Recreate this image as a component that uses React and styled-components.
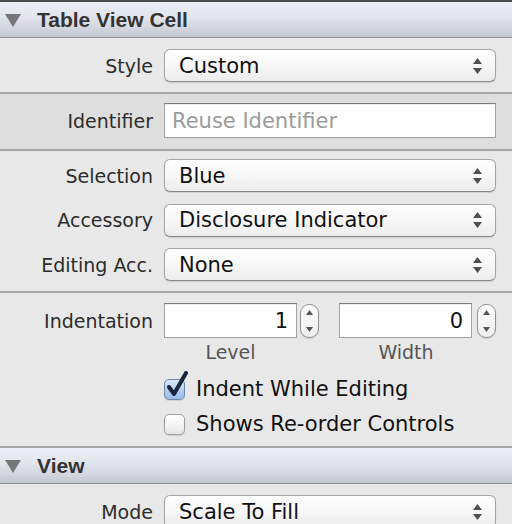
import React from "react";
import styled, { createGlobalStyle } from "styled-components";

const GlobalStyle = createGlobalStyle`
  html, body {
    margin: 0;
    padding: 0;
    background: #e8e8e8;
    overflow: hidden;
  }
  body {
    font-family: "DejaVu Sans", "Liberation Sans", sans-serif;
  }
`;

const Panel = styled.div`
  width: 512px;
  height: 524px;
  display: flex;
  flex-direction: column;
  background: #e8e8e8;
  border-top: 2px solid #4d4d4f;
  box-sizing: border-box;
  overflow: hidden;
`;

const Header = styled.div`
  height: 35px;
  flex: none;
  display: flex;
  align-items: center;
  gap: 16px;
  padding-left: 5px;
  background: linear-gradient(#eceef5 0%, #e2e4ec 45%, #d3d5df 75%, #c3c5cf 100%);
  border-bottom: 1px solid #8e8e92;
`;

const HeaderTitle = styled.span`
  font-family: "Liberation Sans", Arial, sans-serif;
  font-weight: 700;
  font-size: 21px;
  color: #333;
  padding-top: 1px;
`;

const Section = styled.div`
  flex: none;
  display: flex;
  flex-direction: column;
  gap: ${({ $gap }) => $gap || 0}px;
  padding: ${({ $top }) => $top}px 16px ${({ $bottom }) => $bottom}px 0;
  background: ${({ $dark }) => ($dark ? "#dedede" : "#e8e8e8")};
  border-bottom: ${({ $noLine }) => ($noLine ? "none" : "2px solid #a6a6a6")};
`;

const Row = styled.div`
  display: grid;
  grid-template-columns: 153px 1fr;
  column-gap: 11px;
  align-items: center;
`;

const Label = styled.span`
  text-align: right;
  font-size: 19px;
  color: #2c2c2c;
  white-space: nowrap;
`;

const Select = styled.div`
  height: 33px;
  box-sizing: border-box;
  display: flex;
  align-items: center;
  justify-content: space-between;
  padding: 0 13px 0 14px;
  border: 1px solid #a4a4a4;
  border-bottom-color: #8a8a8a;
  border-radius: 6px;
  background: linear-gradient(#ffffff 0%, #f7f7f7 50%, #ececec 100%);
  box-shadow: 0 1px 1px rgba(0, 0, 0, 0.12);
  font-size: 21px;
  color: #111;
`;

const TextField = styled.div`
  height: 35px;
  box-sizing: border-box;
  display: flex;
  align-items: center;
  justify-content: ${({ $align }) => ($align === "right" ? "flex-end" : "flex-start")};
  padding: 0 8px 0 7px;
  background: #fff;
  border: 1px solid #a2a2a2;
  border-top-color: #7c7c7c;
  box-shadow: inset 0 1px 1px rgba(0, 0, 0, 0.08);
  font-size: 21px;
  color: ${({ $placeholder }) => ($placeholder ? "#9b9b9b" : "#111")};
  flex: 1;
  min-width: 0;
`;

const StepGrid = styled.div`
  display: grid;
  grid-template-columns: 155px 157px;
  column-gap: 20px;
`;

const StepControls = styled.div`
  display: flex;
  align-items: center;
  gap: ${({ $gap }) => $gap}px;
`;

const Stepper = styled.div`
  width: 19px;
  height: 34px;
  flex: none;
  box-sizing: border-box;
  border: 1px solid #929292;
  border-radius: 9px;
  background: linear-gradient(#ffffff, #eeeeee);
  box-shadow: 0 1px 1px rgba(0, 0, 0, 0.12);
  display: flex;
  align-items: center;
  justify-content: center;
`;

const Caption = styled.span`
  width: ${({ $w }) => $w}px;
  text-align: center;
  font-size: 19px;
  color: #555;
  line-height: 25px;
  padding-top: 2px;
`;

const Checks = styled.div`
  display: flex;
  flex-direction: column;
  gap: 11px;
  padding-top: 12px;
`;

const CheckRow = styled.div`
  height: 24px;
  display: flex;
  align-items: center;
  gap: 11px;
  font-size: 21px;
  color: #111;
`;

const Box = styled.span`
  position: relative;
  width: 21px;
  height: 21px;
  flex: none;
  box-sizing: border-box;
  border-radius: 5px;
  border: 1px solid ${({ $on }) => ($on ? "#6f88a8" : "#a0a0a0")};
  background: ${({ $on }) =>
    $on
      ? "linear-gradient(#dbe8f7 0%, #b3cdee 55%, #9bbde8 100%)"
      : "linear-gradient(#ffffff 0%, #f1f1f1 60%, #e4e4e4 100%)"};
  box-shadow: 0 1px 1px rgba(0, 0, 0, 0.12);
`;

const Tick = styled.svg`
  position: absolute;
  left: 0px;
  top: -9px;
`;

const Triangle = () => (
  <svg width="16" height="14" viewBox="0 0 16 14">
    <polygon points="0,1 16,1 8,14" fill="#767676" />
  </svg>
);

const Arrows = () => (
  <svg width="9" height="16" viewBox="0 0 9 16">
    <polygon points="4.5,0 9,6 0,6" fill="#4f4f4f" />
    <polygon points="0,10 9,10 4.5,16" fill="#4f4f4f" />
  </svg>
);

const StepArrows = () => (
  <svg width="9" height="22" viewBox="0 0 9 22">
    <polygon points="4.5,0 8,5 1,5" fill="#555" />
    <polygon points="1,17 8,17 4.5,22" fill="#555" />
  </svg>
);

const Field = ({ label, children }) => (
  <Row>
    <Label>{label}</Label>
    {children}
  </Row>
);

const PopUp = ({ label, value }) => (
  <Field label={label}>
    <Select>
      <span>{value}</span>
      <Arrows />
    </Select>
  </Field>
);

const Check = ({ on, children }) => (
  <CheckRow>
    <Box $on={on}>
      {on && (
        <Tick width="24" height="28" viewBox="0 0 24 28">
          <path
            d="M4 16 L9 23 L21 2"
            fill="none"
            stroke="#1b2740"
            strokeWidth="4"
            strokeLinecap="round"
            strokeLinejoin="round"
          />
        </Tick>
      )}
    </Box>
    <span>{children}</span>
  </CheckRow>
);

export default function App() {
  return (
    <>
      <GlobalStyle />
      <Panel>
        <Header>
          <Triangle />
          <HeaderTitle>Table View Cell</HeaderTitle>
        </Header>

        <Section $top={11} $bottom={10}>
          <PopUp label="Style" value="Custom" />
        </Section>

        <Section $dark $top={9} $bottom={11}>
          <Field label="Identifier">
            <TextField $placeholder>Reuse Identifier</TextField>
          </Field>
        </Section>

        <Section $top={8} $bottom={10} $gap={11.5}>
          <PopUp label="Selection" value="Blue" />
          <PopUp label="Accessory" value="Disclosure Indicator" />
          <PopUp label="Editing Acc." value="None" />
        </Section>

        <Section $top={10} $bottom={10}>
          <Field label="Indentation">
            <StepGrid>
              <StepControls $gap={3}>
                <TextField $align="right">1</TextField>
                <Stepper>
                  <StepArrows />
                </Stepper>
              </StepControls>
              <StepControls $gap={5}>
                <TextField $align="right">0</TextField>
                <Stepper>
                  <StepArrows />
                </Stepper>
              </StepControls>
            </StepGrid>
          </Field>
          <Row>
            <span />
            <StepGrid>
              <Caption $w={133}>Level</Caption>
              <Caption $w={134}>Width</Caption>
            </StepGrid>
          </Row>
          <Row>
            <span />
            <Checks>
              <Check on>Indent While Editing</Check>
              <Check>Shows Re-order Controls</Check>
            </Checks>
          </Row>
        </Section>

        <Header>
          <Triangle />
          <HeaderTitle>View</HeaderTitle>
        </Header>

        <Section $top={11} $bottom={10} $noLine>
          <PopUp label="Mode" value="Scale To Fill" />
        </Section>
      </Panel>
    </>
  );
}
